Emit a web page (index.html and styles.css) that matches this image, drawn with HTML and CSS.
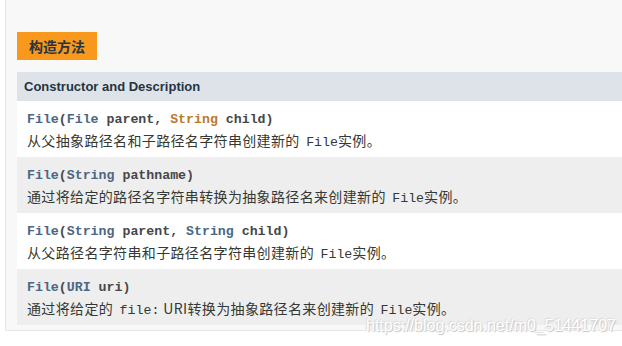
FILE: index.html
```html
<!DOCTYPE html>
<html lang="zh">
<head>
<meta charset="utf-8">
<title>构造方法</title>
<link rel="stylesheet" href="styles.css">
</head>
<body>
<div class="page">
  <div class="panel">
    <div class="tab">构造方法</div>
    <div class="table">
      <div class="head">Constructor and Description</div>
      <div class="row">
        <div class="sig"><span class="link">File</span>(<span class="link">File</span> parent, <span class="visited">String</span> child)</div>
        <div class="desc">从父抽象路径名和子路径名字符串创建新的 <code>File</code>实例。</div>
      </div>
      <div class="row alt">
        <div class="sig"><span class="link">File</span>(<span class="link">String</span> pathname)</div>
        <div class="desc">通过将给定的路径名字符串转换为抽象路径名来创建新的 <code>File</code>实例。</div>
      </div>
      <div class="row">
        <div class="sig"><span class="link">File</span>(<span class="link">String</span> parent, <span class="link">String</span> child)</div>
        <div class="desc">从父路径名字符串和子路径名字符串创建新的 <code>File</code>实例。</div>
      </div>
      <div class="row alt">
        <div class="sig"><span class="link">File</span>(<span class="link">URI</span> uri)</div>
        <div class="desc">通过将给定的 <code class="scheme">file:</code>URI转换为抽象路径名来创建新的 <code>File</code>实例。</div>
      </div>
    </div>
    <div class="watermark">https://blog.csdn.net/m0_51441707</div>
  </div>
</div>
</body>
</html>
```
FILE: styles.css
```css
html, body {
  margin: 0;
  padding: 0;
  background: #ffffff;
}
body {
  min-height: 346px;
}
.page {
  padding-left: 5px;
  width: 617px;
}
.panel {
  position: relative;
  background: #f8f8f8;
  border-left: 1px solid #e6e6e6;
  border-bottom: 1px solid #e6e6e6;
  padding: 32px 0 5px 11px;
  height: 293px;
}
.tab {
  display: inline-block;
  background: #f8981d;
  color: #253441;
  font-family: "Noto Sans CJK SC", sans-serif;
  font-weight: bold;
  font-size: 14px;
  line-height: 28px;
  height: 28px;
  padding: 0 12px;
  vertical-align: top;
}
.table {
  margin-top: 12px;
}
.head {
  background: #dee3e9;
  color: #253441;
  font-family: "Liberation Sans", Arial, sans-serif;
  font-weight: bold;
  font-size: 13px;
  height: 29px;
  line-height: 30px;
  padding-left: 7px;
}
.row {
  background: #ffffff;
  height: 56px;
  padding: 10px 0 0 10px;
  box-sizing: border-box;
}
.row.alt {
  background: #eeeeee;
}
.sig {
  font-family: "Liberation Mono", "Courier New", monospace;
  font-weight: bold;
  font-size: 13.25px;
  line-height: 18px;
  color: #474747;
}
.link {
  color: #4a6782;
}
.visited {
  color: #bb7a2a;
}
.desc {
  font-family: "Noto Sans CJK SC", sans-serif;
  font-size: 14px;
  letter-spacing: 0.35px;
  line-height: 22px;
  color: #353833;
}
.desc code {
  font-family: "Liberation Mono", "Courier New", monospace;
  font-size: 13.25px;
  letter-spacing: 0;
  margin-left: 3px;
  color: #353833;
}
.desc code.scheme {
  margin-right: 4px;
}
.watermark {
  position: absolute;
  left: 360px;
  top: 317px;
  font-family: "Liberation Sans", Arial, sans-serif;
  font-size: 16px;
  color: #ffffff;
  text-shadow: 1px 1px 1px #c4c4c4, -1px -1px 1px #dcdcdc;
  white-space: nowrap;
}
```
